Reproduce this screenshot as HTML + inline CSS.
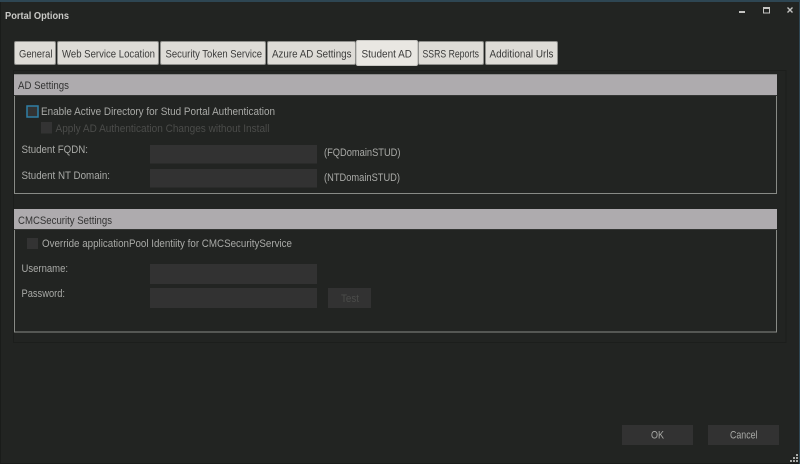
<!DOCTYPE html>
<html><head><meta charset="utf-8"><style>
html,body{margin:0;padding:0;background:#222422;width:800px;height:464px;overflow:hidden}
svg{display:block;filter:blur(.3px)}
text{font-family:"Liberation Sans",sans-serif;font-size:11px}
.d{fill:#2b2b2a}.l{fill:#a9aaa7}
</style></head><body>
<svg width="800" height="464" viewBox="0 0 800 464">
<rect width="800" height="464" fill="#222422"/>
<rect width="800" height="2" fill="#2e4653"/>
<rect x="799" y="0" width="1" height="464" fill="#2e4653"/>
<rect x="0" y="2" width="1" height="462" fill="#1a1c1a"/>
<rect x="0" y="463" width="799" height="1" fill="#1a1c1a"/>
<text x="5" y="19" fill="#c9c9c6" font-weight="bold" textLength="64" lengthAdjust="spacingAndGlyphs" style="font-size:10.5px">Portal Options</text>
<rect x="739" y="11" width="6" height="2" fill="#c4c4c2"/>
<rect x="763.500" y="7.500" width="6" height="5.500" fill="none" stroke="#c4c4c2"/><rect x="763" y="7" width="7" height="2" fill="#c4c4c2"/>
<path d="M787.500 7.500l5 5m0-5l-5 5" stroke="#c4c4c2" stroke-width="1.400" fill="none"/>
<rect x="13.500" y="70.500" width="772.500" height="272" fill="none" stroke="#1c1e1c"/>
<g fill="#dedcd7" stroke="#8f8f8c" stroke-width="1">
<rect x="14.500" y="41.500" width="41" height="23" rx="1.500"/>
<rect x="57.500" y="41.500" width="101" height="23" rx="1.500"/>
<rect x="160.500" y="41.500" width="105" height="23" rx="1.500"/>
<rect x="267.500" y="41.500" width="88" height="23" rx="1.500"/>
<rect x="418.500" y="41.500" width="65" height="23" rx="1.500"/>
<rect x="485.500" y="41.500" width="72" height="23" rx="1.500"/>
<rect x="356.500" y="40.500" width="61" height="25" rx="1.500" fill="#e9e7e2" stroke="#c9c8c4"/>
</g>
<g fill="#3b3b3a">
<text x="19" y="57.500" textLength="33.500" lengthAdjust="spacingAndGlyphs">General</text>
<text x="62" y="57.500" textLength="93" lengthAdjust="spacingAndGlyphs">Web Service Location</text>
<text x="165.500" y="57.500" textLength="96.500" lengthAdjust="spacingAndGlyphs">Security Token Service</text>
<text x="272" y="57.500" textLength="79.500" lengthAdjust="spacingAndGlyphs">Azure AD Settings</text>
<text x="361.500" y="57.500" textLength="50.500" lengthAdjust="spacingAndGlyphs">Student AD</text>
<text x="422.500" y="57.500" textLength="56.500" lengthAdjust="spacingAndGlyphs">SSRS Reports</text>
<text x="489.500" y="57.500" textLength="64" lengthAdjust="spacingAndGlyphs">Additional Urls</text>
</g>
<rect x="14.500" y="74.500" width="762" height="119" fill="none" stroke="#888a86"/>
<rect x="14" y="74" width="763" height="21" fill="#aeabae"/>
<rect x="14" y="74" width="763" height="1" fill="#8a8a8a"/>
<rect x="14" y="95" width="763" height="1" fill="#333533"/>
<text x="18" y="89" fill="#333333" textLength="51" lengthAdjust="spacingAndGlyphs">AD Settings</text>
<rect x="27" y="106" width="11" height="11" fill="#333" stroke="#2f7fa6" stroke-width="1.500"/>
<text x="41" y="115" class="l" textLength="234" lengthAdjust="spacingAndGlyphs">Enable Active Directory for Stud Portal Authentication</text>
<rect x="41" y="122" width="11" height="11.500" fill="#333"/>
<text x="55.500" y="132" fill="#4b4c4a" textLength="214" lengthAdjust="spacingAndGlyphs">Apply AD Authentication Changes without Install</text>
<text x="21.500" y="153" class="l" textLength="66.500" lengthAdjust="spacingAndGlyphs">Student FQDN:</text>
<text x="21.500" y="179" class="l" textLength="88.500" lengthAdjust="spacingAndGlyphs">Student NT Domain:</text>
<rect x="150" y="145" width="167" height="18.500" fill="#323232"/>
<rect x="150" y="169" width="167" height="18.500" fill="#323232"/>
<text x="324" y="156" class="l" textLength="76.500" lengthAdjust="spacingAndGlyphs">(FQDomainSTUD)</text>
<text x="324" y="181" class="l" textLength="76" lengthAdjust="spacingAndGlyphs">(NTDomainSTUD)</text>
<rect x="14.500" y="209.500" width="762" height="122.500" fill="none" stroke="#888a86"/>
<rect x="14" y="209" width="763" height="20" fill="#aeabae"/>
<rect x="14" y="229" width="763" height="1" fill="#333533"/>
<text x="18" y="224" fill="#333333" textLength="94" lengthAdjust="spacingAndGlyphs">CMCSecurity Settings</text>
<rect x="27" y="238" width="11" height="11" fill="#333"/>
<text x="42" y="247" class="l" textLength="250" lengthAdjust="spacingAndGlyphs">Override applicationPool Identiity for CMCSecurityService</text>
<text x="21.500" y="272" class="l" textLength="46.500" lengthAdjust="spacingAndGlyphs">Username:</text>
<text x="21.500" y="297" class="l" textLength="43.500" lengthAdjust="spacingAndGlyphs">Password:</text>
<rect x="150" y="264" width="167" height="20" fill="#323232"/>
<rect x="150" y="288" width="167" height="20" fill="#323232"/>
<rect x="328" y="288" width="43" height="20" fill="#323232"/>
<text x="341" y="302" fill="#4b4c4a" textLength="18" lengthAdjust="spacingAndGlyphs">Test</text>
<rect x="622" y="425" width="71" height="20" fill="#323232"/>
<rect x="708" y="425" width="71" height="20" fill="#323232"/>
<text x="651" y="438.500" fill="#a9aaa7" textLength="13" lengthAdjust="spacingAndGlyphs">OK</text>
<text x="730" y="438.500" fill="#a9aaa7" textLength="27.500" lengthAdjust="spacingAndGlyphs">Cancel</text>
<g fill="#a9aaa7"><rect x="796" y="454" width="2" height="2"/><rect x="796" y="457" width="2" height="2"/><rect x="793" y="457" width="2" height="2"/><rect x="796" y="460" width="2" height="2"/><rect x="793" y="460" width="2" height="2"/><rect x="790" y="460" width="2" height="2"/></g>
</svg>
</body></html>
